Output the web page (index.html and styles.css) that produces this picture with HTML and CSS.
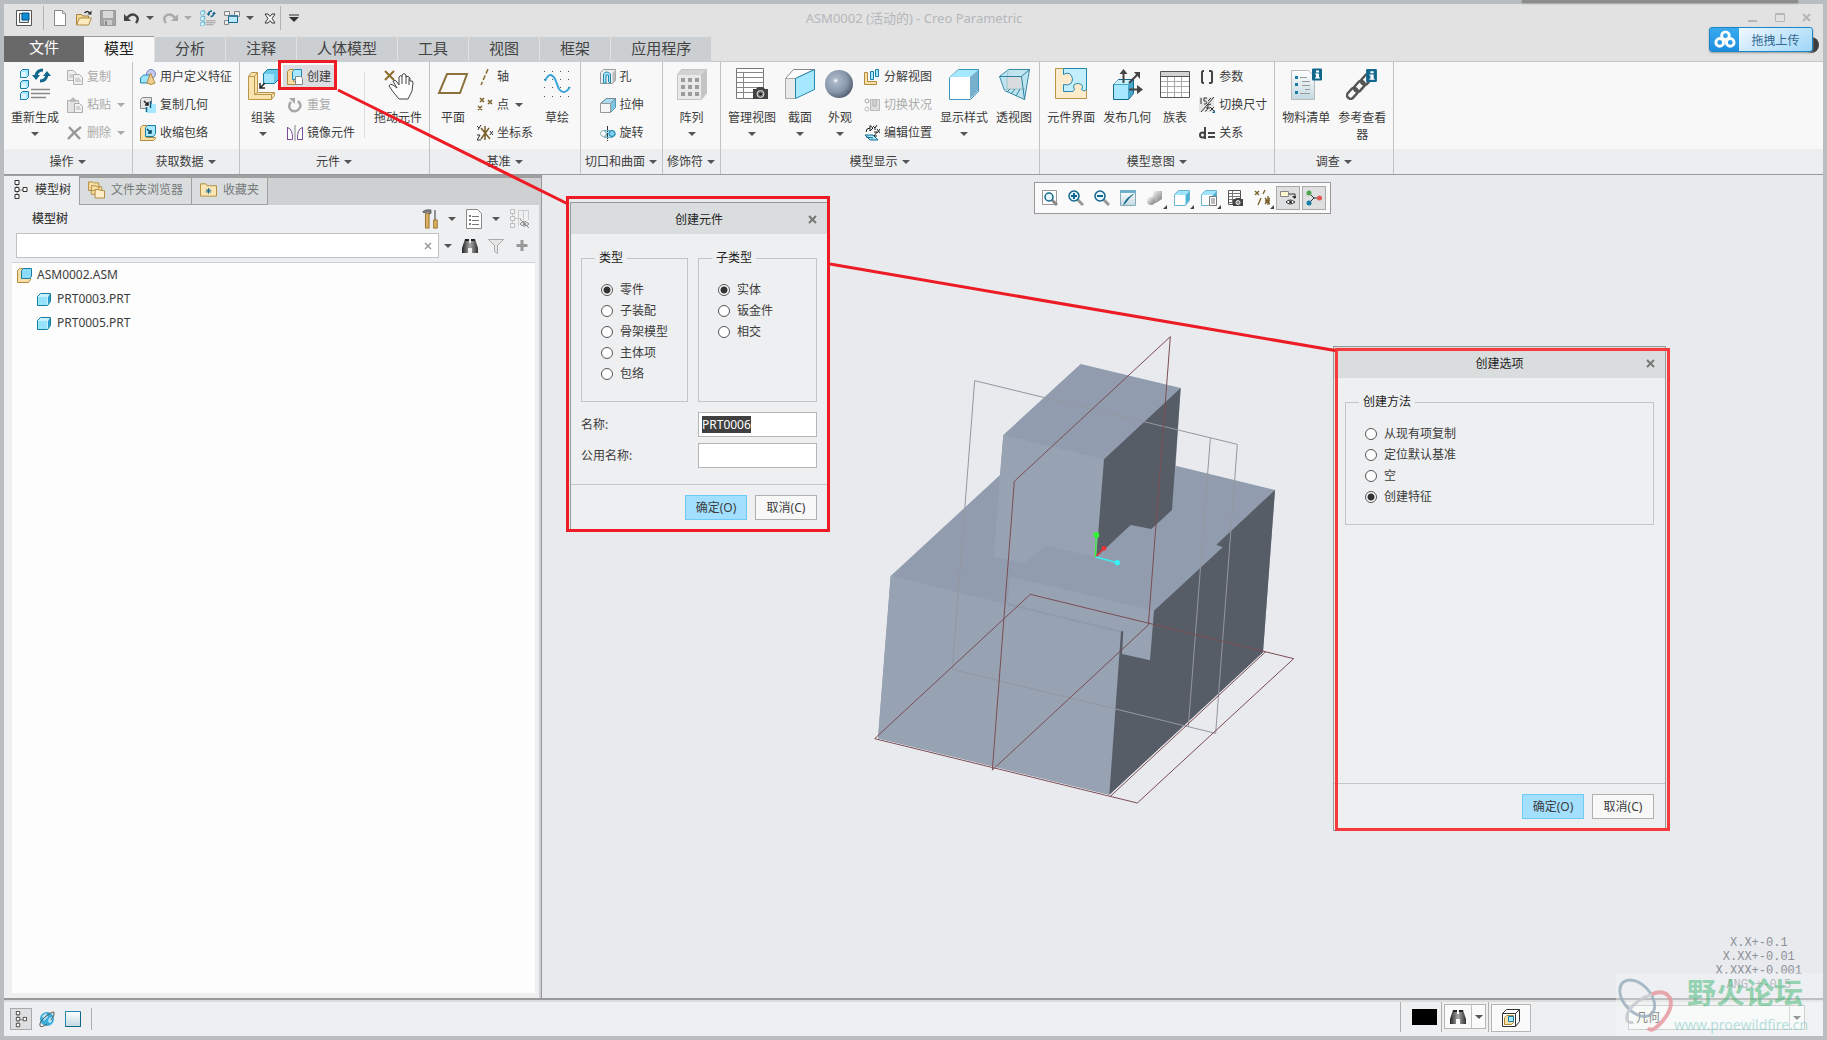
FILE: index.html
```html
<!DOCTYPE html>
<html lang="zh-CN">
<head>
    <meta charset="UTF-8">
    <meta name="viewport" content="width=device-width, initial-scale=1.0">
    <title>ASM0002 (活动的) - Creo Parametric</title>
    <link rel="stylesheet" href="styles.css">
</head>
<body>
    <!-- 图标库 -->
    <svg class="sprite" aria-hidden="true">
        <defs>
            <linearGradient id="gWhite" x1="0" y1="0" x2="0" y2="1"><stop offset="0" stop-color="#fff"/><stop offset="1" stop-color="#c3d8e0"/></linearGradient>
            <linearGradient id="gDark" x1="0" y1="0" x2="1" y2="0"><stop offset="0" stop-color="#222"/><stop offset=".5" stop-color="#aaa"/><stop offset="1" stop-color="#333"/></linearGradient>
            <radialGradient id="gBall" cx=".38" cy=".38" r=".65"><stop offset="0" stop-color="#fff"/><stop offset=".15" stop-color="#a9b7c8"/><stop offset=".65" stop-color="#8796aa"/><stop offset="1" stop-color="#566273"/></radialGradient>
            <linearGradient id="gGray" x1="0" y1="0" x2="1" y2="1"><stop offset="0" stop-color="#fff"/><stop offset="1" stop-color="#777"/></linearGradient>
        </defs>
        <symbol id="i-app" viewBox="0 0 16 16"><path d="M.5.5h15v15H.5z" fill="#fff" stroke="#555"/><path d="M3.500 3.500h9v9h-9z" fill="#d9e8ef" stroke="#555"/><path d="M6 3h7v7H6z" fill="#0a8fd6" stroke="#0b4f7c"/></symbol>
        <symbol id="i-new" viewBox="0 0 16 16"><path d="M2.500.5h8l3 3v12h-11z" fill="#fff" stroke="#888"/><path d="M10.500.5v3h3" fill="#ddd" stroke="#999"/></symbol>
        <symbol id="i-open" viewBox="0 0 16 16"><path d="M.5 15V4.500h5l1 1.500h6v3" fill="#f5d999" stroke="#a8803a"/><path d="M.5 15l3-7h12l-3 7z" fill="#fdebc0" stroke="#b08b3c"/><path d="M8.500 3q3-3 5 0" fill="none" stroke="#333" stroke-width="1.500"/><path d="M15.500.5v4h-4z" fill="#333"/></symbol>
        <symbol id="i-save" viewBox="0 0 16 16"><path d="M.5.5h15v15h-15z" fill="#a4a4a4" stroke="#999"/><path d="M3 1h10v7H3z" fill="#d9d9d9"/><path d="M4 10h8v5H4z" fill="#c8c8c8"/><path d="M5 11h2v4H5z" fill="#888"/></symbol>
        <symbol id="i-undo" viewBox="0 0 16 16"><path d="M3 8q4-5 8-3 5 3 1 8" fill="none" stroke="#444" stroke-width="2.500"/><path d="M0 4v7h7z" fill="#444"/></symbol>
        <symbol id="i-redo" viewBox="0 0 16 16"><path d="M13 8q-4-5-8-3-5 3-1 8" fill="none" stroke="#aaa" stroke-width="2.500"/><path d="M16 4v7H9z" fill="#aaa"/></symbol>
        <symbol id="i-regen" viewBox="0 0 32 32"><g fill="#a5e8ff" stroke="#187ea8"><path d="M1.500 3.500l2-2h6v6l-2 2h-6zM1.500 14.500l2-2h6v6l-2 2h-6zM1.500 25.500l2-2h6v6l-2 2h-6z"/></g><path d="M2 4h5v5H2zM2 15h5v5H2zM2 26h5v5H2z" fill="#dcf6ff"/><path d="M24 2q-6 0-7 6M21 13q6 0 7-6" fill="none" stroke="#12678c" stroke-width="3"/><path d="M13 7h8l-4 5zM24 8h8l-4-5z" fill="#12678c"/><path d="M12 21.500h19M12 25.500h19M12 29.500h15" stroke="#888" stroke-width="1.500"/></symbol>
        <symbol id="i-wins" viewBox="0 0 16 16"><path d="M.5 1.500h5v4h-5zM10.500 1.500h5v5h-5zM.5 10.500h4v4h-4z" fill="#eee" stroke="#888"/><path d="M4.500 5.500h9v7h-9z" fill="#bdeafc" stroke="#12678c"/><path d="M4 5h10v2H4z" fill="#3f7f9c"/></symbol>
        <symbol id="i-closewin" viewBox="0 0 16 16"><path d="M3 4h3l2 2.500L10 4h3l-3 4.500L13 13h-3l-2-2.500L6 13H3l3-4.500z" fill="#fff" stroke="#333"/></symbol>
        <symbol id="i-copy" viewBox="0 0 16 16"><g fill="#eee" stroke="#b0b0b0"><path d="M.5 1.500h6l3 3v7h-9z"/><path d="M6.500 5.500h6l3 3v7h-9z"/></g><path d="M2 6h4M2 8h4M8 10h5M8 12h6" stroke="#b5b5b5"/></symbol>
        <symbol id="i-paste" viewBox="0 0 16 16"><path d="M.5 3.500h11v12h-11z" fill="#e3e3e3" stroke="#b0b0b0"/><path d="M3 3l3-3 3 3v2H3z" fill="#bbb"/><path d="M7.500 6.500h5l3 3v6h-8z" fill="#f3f3f3" stroke="#aaa"/><path d="M9 10h4M9 12h5" stroke="#b5b5b5"/></symbol>
        <symbol id="i-del" viewBox="0 0 16 16"><path d="M2 2l11 12M14 2Q7 7 1 14" stroke="#999" stroke-width="2.500" fill="none"/></symbol>
        <symbol id="i-udf" viewBox="0 0 16 16"><circle cx="11" cy="5" r="4.500" fill="#c4cbf2" stroke="#7a84c0"/><path d="M.5 9l3-3h6v6l-2 2h-7z" fill="#9be2fa" stroke="#2587ad"/><path d="M10.500 4L15 14q-4 3-8 0z" fill="#efcf91" stroke="#b08b3c"/></symbol>
        <symbol id="i-cpgeo" viewBox="0 0 16 16"><path d="M.5 2.500l2-2h9v9l-2 2h-9z" fill="#e4e4e4" stroke="#888"/><path d="M4 4l4 4M8 5v3H5" stroke="#222" stroke-width="1.500" fill="none"/><path d="M7 11h4V7h5v9H7z" fill="#a5e8ff"/><path d="M10.500 4v7M6.500 15v-5" stroke="#12678c" stroke-width="1.500"/></symbol>
        <symbol id="i-shrink" viewBox="0 0 16 16"><path d="M.5 2.500l2-2h4v12h9v1l-2 2h-13z" fill="#fae0a6" stroke="#b08b3c"/><path d="M5.500 2.500l2-2h8v8l-2 3h-8z" fill="#a5e8ff" stroke="#187ea8"/><path d="M7 4l4 4M11 5v3H8" stroke="#0d445e" stroke-width="1.500" fill="none"/></symbol>
        <symbol id="i-asm32" viewBox="0 0 32 32"><path d="M1.500 8.500l3-4h6v20h17v3l-3 4h-23z" fill="#fbe3ad" stroke="#b9954c"/><path d="M1.500 8.500h6v18h17v5M7.500 8.500l3-4M7.500 26.500l3-2M24.500 26.500l3-2" fill="none" stroke="#b9954c"/><path d="M16.500 5.500l4-4h11v10l-4 4h-11z" fill="#6ac8ea" stroke="#187ea8"/><path d="M17 6h10v9H17z" fill="#9fe4fb"/><path d="M18 15l-5 5M13 15v5h5" stroke="#222" stroke-width="1.500" fill="none"/></symbol>
        <symbol id="i-create" viewBox="0 0 16 16"><path d="M.5 2.500l2-2h4v12h5v3h-11z" fill="#fae0a6" stroke="#b08b3c"/><path d="M5.500 2.500l2-2h7v7l-2 3h-7z" fill="#a5e8ff" stroke="#2587ad"/><path d="M8.500 7.500h5l2 2v6h-7z" fill="#fff" stroke="#888"/></symbol>
        <symbol id="i-repeat" viewBox="0 0 16 16"><path d="M11 4q5 5 0 9-5 3-8-1-2-4 1-7" fill="none" stroke="#a8a8a8" stroke-width="2.500"/><path d="M2 1h6v6z" fill="#a8a8a8"/></symbol>
        <symbol id="i-mirror" viewBox="0 0 16 16"><path d="M.5 2.500Q6 4 5.500 14.500h-5M15.500 2.500Q10 4 10.500 14.500h5M.5 2v13M15.500 2v13" fill="#fff" stroke="#7b4b9c"/><path d="M8 0v16" stroke="#888"/></symbol>
        <symbol id="i-drag" viewBox="0 0 32 32"><path d="M3 3l9 9M12 3l-9 9" stroke="#8a6d2c" stroke-width="2"/><path d="M11 13q2-2 4 1l2 3V9q2-3 3 0V7q2-3 4 0v2q2-2 4 1v3q3-1 3 2l-1 8-4 8h-9l-5-6-5-7q1-3 4-1l4 3z" fill="#fff" stroke="#444"/><path d="M20 9v7M24 8v8M27 10v7" stroke="#444"/></symbol>
        <symbol id="i-plane" viewBox="0 0 32 32"><path d="M10 6h20l-7 19H2z" fill="#fafafa" stroke="#8c713a" stroke-width="2"/></symbol>
        <symbol id="i-axis" viewBox="0 0 16 16"><path d="M11 0L4 16" stroke="#8a6d2c" stroke-width="1.500" stroke-dasharray="5 2"/></symbol>
        <symbol id="i-point" viewBox="0 0 16 16"><path d="M3 1l4 4M7 1L3 5M11 3l4 4M15 3l-4 4M1 9l4 4M5 9l-4 4" stroke="#7a602a" stroke-width="1.500"/></symbol>
        <symbol id="i-csys" viewBox="0 0 16 16"><path d="M8 1v14M4 3l9 11M12 3L4 14" stroke="#7a602a" stroke-width="1.500"/><path d="M0 1l2 2 2-3M2 3L1 5M0 10h3l-3 5h4M13 6l3 4M16 6l-3 4" stroke="#333" fill="none"/></symbol>
        <symbol id="i-sketch" viewBox="0 0 32 32"><g stroke="#555" stroke-dasharray="1 7"><path d="M3 3.500h28M3 11.500h28M3 19.500h28M3 28.500h28"/></g><path d="M4 13q5-11 10-2l4 10q5 7 11-2" fill="none" stroke="#3aa5d6" stroke-width="2"/></symbol>
        <symbol id="i-hole" viewBox="0 0 16 16"><path d="M.5 3.500l3-3h12v11l-3 3h-12z" fill="#eee" stroke="#999"/><path d="M12.500 14V4l3-3v10z" fill="#bbb"/><path d="M3.500 14V5q3-4 7 0v9l-2-1V6H6v8z" fill="#a5e8ff" stroke="#2587ad"/></symbol>
        <symbol id="i-extrude" viewBox="0 0 16 16"><path d="M.5 6.500l6-5h9v9l-5 5" fill="#7cc7e4" stroke="#5a97b0"/><path d="M.5 6.500l6-5h9l-5 5z" fill="#a8dcf0" stroke="#789"/><path d="M.5 6.500h10v9H.5z" fill="#f6f6f6" stroke="#999"/></symbol>
        <symbol id="i-revolve" viewBox="0 0 16 16"><circle cx="3.500" cy="8.500" r="3" fill="#fff" stroke="#8aa"/><path d="M4 5.500h8q4 1 3 5l-3 2H4q5-3 0-7z" fill="#a5e8ff" stroke="#7ab"/><circle cx="12" cy="8.500" r="3" fill="#7fd0f0" stroke="#187ea8"/><path d="M7.500 1v15" stroke="#333" stroke-dasharray="4 1 1 1"/></symbol>
        <symbol id="i-pattern" viewBox="0 0 32 32"><path d="M1.500 6.500l4-5h25v24l-5 6h-24z" fill="#d2d2d2" stroke="#c4c4c4"/><path d="M2 7h23v24H2z" fill="#e8e8e8"/><path d="M25 31V7l5-5v23z" fill="#c4c4c4"/><path d="M5 10h4v4H5zM12 10h4v4h-4zM19 10h4v4h-4zM5 17h4v4H5zM12 17h4v4h-4zM19 17h4v4h-4zM5 24h4v4H5zM12 24h4v4h-4zM19 24h4v4h-4z" fill="#9c9c9c"/></symbol>
        <symbol id="i-mgview" viewBox="0 0 32 32"><path d="M.5.500h27v30H.500z" fill="#fff" stroke="#777"/><path d="M1 4.500h27M1 9.500h27M1 14.500h27M1 19.500h27M1 24.500h27M7.500 5v26" stroke="#888"/><path d="M17 21h3l2-2h5l2 2h3v10H17z" fill="#444"/><circle cx="24.500" cy="26" r="3.500" fill="#777" stroke="#ddd"/><circle cx="24.500" cy="26" r="1.500" fill="#222"/></symbol>
        <symbol id="i-mgview16" viewBox="0 0 16 16"><path d="M1.500.500h12v14h-12z" fill="#fff" stroke="#555"/><path d="M2 3.500h11M2 6.500h11M2 9.500h11M2 12.500h11M5.500 1v13" stroke="#777"/><path d="M6 9h2l1-1h4l1 1h2v7H6z" fill="#444"/><circle cx="11" cy="12.500" r="2" fill="#888" stroke="#eee"/></symbol>
        <symbol id="i-section" viewBox="0 0 32 32"><path d="M1.500 10.500l8-9h21l-19 9z" fill="#fff" stroke="#888"/><path d="M1.500 10.500h10v20h-10z" fill="#e9e9e9" stroke="#aaa"/><path d="M11.500 10.500l19-9v20l-19 9z" fill="#a5e8ff" stroke="#2587ad"/></symbol>
        <symbol id="i-ball" viewBox="0 0 32 32"><circle cx="15" cy="16" r="14" fill="url(#gBall)"/></symbol>
        <symbol id="i-explode" viewBox="0 0 16 16"><path d="M.5 3.500h3v9h9v3H.500z" fill="#fae0a6" stroke="#b08b3c"/><path d="M6.500 2.500h3v8h-3zM11.500.500h3v7h-3z" fill="#a5e8ff" stroke="#187ea8"/></symbol>
        <symbol id="i-toggle" viewBox="0 0 16 16"><circle cx="3" cy="4" r="2" fill="none" stroke="#aaa"/><circle cx="3" cy="12" r="2" fill="none" stroke="#bbb"/><path d="M6.500 2.500h9v11h-9z" fill="#ddd" stroke="#bbb"/><path d="M9 3v6h3V3" fill="none" stroke="#aaa"/></symbol>
        <symbol id="i-editpos" viewBox="0 0 16 16"><path d="M1 10h8l5 5H6z" fill="#a5e8ff" stroke="#12678c"/><path d="M2 12l7 1" stroke="#12678c"/><path d="M2 7q0-4 4-4M6 .500L9 3 6 6zM9 1l2 2 2-3M11 3v2M13 4l3 4M16 4l-3 4M10 7h3l-3 4h3" stroke="#222" fill="none"/></symbol>
        <symbol id="i-box" viewBox="0 0 32 32"><path d="M1.500 9.500l9-8h20v22l-8 8h-21z" fill="#fff" stroke="#3f97bd"/><path d="M2 9l9-7h19l-8 7z" fill="#a5e8ff"/><path d="M22 31V9l8-7v21z" fill="#76b0cc"/></symbol>
        <symbol id="i-persp" viewBox="0 0 32 32"><path d="M1.500 8.500l9-7h21l-5 30-20-9z" fill="#bfe3ef" stroke="#378aa8"/><path d="M9 9h14v13H9z" fill="#d9dcde"/><path d="M10.500 1.500L9 9v12l-2.500 2M6.500 22.500L9 21h19" fill="none" stroke="#a0c4d2"/><path d="M1.500 8.500h22l8-7M23.500 8.500l3 23M12 21l-3 3M17 21l-4 5M22 21l-4 7" fill="none" stroke="#2d819f"/></symbol>
        <symbol id="i-puzzle" viewBox="0 0 32 32"><path d="M.5.500h31v30H.500z" fill="#fdebcb" stroke="#b9954c"/><path d="M8.500.500h23v21q-2 3-5 0 3-5-3-6-7 0-4 6-1 3-4 2H8.500v-7q9 2 9-6-2-8-9-4z" fill="#c3eefd" stroke="#2587ad"/></symbol>
        <symbol id="i-publish" viewBox="0 0 32 32"><path d="M2.500 16.500l5-5h15v14l-5 6h-15z" fill="#4aa6cb" stroke="#12678c"/><path d="M3 17h14v14H3z" fill="#a5e8ff"/><path d="M7 12h14l-4 4H3z" fill="#c9f2ff"/><path d="M12.500 15V4M18 15L27 6M18 21.500h9" stroke="#444" stroke-width="2"/><path d="M8.500 6l4-5 4 5zM23 4h6v7zM26 17l6 4.500-6 4.500z" fill="#444"/></symbol>
        <symbol id="i-table" viewBox="0 0 32 32"><path d="M1.500 3.500h29v26h-29z" fill="#fff" stroke="#555"/><path d="M2 4h28v4H2z" fill="#d2d2d2"/><path d="M2 8.500h28" stroke="#555"/><path d="M2 13.500h28M2 18.500h28M2 24.500h28M8.500 9v20M15.500 9v20M22.500 9v20" stroke="#aaa"/></symbol>
        <symbol id="i-param" viewBox="0 0 16 16"><path d="M5 2H4L3 3v10l1 1h1M10 2h2l1 1v10l-1 1h-2" fill="none" stroke="#444" stroke-width="2"/></symbol>
        <symbol id="i-dim" viewBox="0 0 16 16"><path d="M0 0h15v15H0z" fill="#e4e4e4"/><path d="M2 1v6M8 1H5v3q4 0 2 3H5M15 0L2 15M6 14q3 0 3-6l3-1M7 11h4M11 10l4 4M15 10l-4 4M9 4l3-3" fill="none" stroke="#333"/><path d="M16 13v3h-3z" fill="#12678c"/></symbol>
        <symbol id="i-rel" viewBox="0 0 16 16"><circle cx="3.500" cy="10" r="2.500" fill="none" stroke="#444" stroke-width="2"/><path d="M6 2v12M9 8h7M9 12h7" stroke="#444" stroke-width="2"/></symbol>
        <symbol id="i-info" viewBox="0 0 10 12"><rect width="10" height="12" rx="1" fill="#12678c"/><path d="M4 2h3v2H4zM3 5h4v4h1v1H3V9h1V6H3z" fill="#fff"/></symbol>
        <symbol id="i-bom" viewBox="0 0 32 32"><path d="M1.500 2.500h17l6 6v23h-23z" fill="url(#gWhite)" stroke="#bbb"/><path d="M5 8h3v3H5zM5 15h3v3H5zM5 23h3v3H5z" fill="#187ea8"/><path d="M10 9.500h7M12 13.500h8M12 17.500h8M15 21.500h5M10 25.500h10" stroke="#999"/><use href="#i-info" x="22" y="0" width="10" height="13"/></symbol>
        <symbol id="i-chain" viewBox="0 0 32 32"><g fill="none" stroke="#555" stroke-width="2.500"><rect x="0" y="22" width="12" height="7" rx="3" transform="rotate(-48 6 25)"/><rect x="7" y="15" width="12" height="7" rx="3" transform="rotate(-48 13 18)"/><rect x="14" y="8" width="12" height="7" rx="3" transform="rotate(-48 20 11)"/></g><use href="#i-info" x="20" y="1" width="11" height="13"/></symbol>
        <symbol id="i-zoomfit" viewBox="0 0 16 16"><path d="M.5.500h14v14H.500z" fill="#fff" stroke="#999"/><path d="M10 10l5 5" stroke="#888" stroke-width="3"/><circle cx="7" cy="7" r="4" fill="#e6f7fd" stroke="#12678c" stroke-width="1.500"/></symbol>
        <symbol id="i-zoomin" viewBox="0 0 16 16"><path d="M9 9l6 6" stroke="#999" stroke-width="3"/><circle cx="6" cy="6" r="5" fill="#e6f7fd" stroke="#12678c" stroke-width="1.500"/><path d="M3 6h6M6 3v6" stroke="#12678c" stroke-width="2"/></symbol>
        <symbol id="i-zoomout" viewBox="0 0 16 16"><path d="M9 9l6 6" stroke="#999" stroke-width="3"/><circle cx="6" cy="6" r="5" fill="#e6f7fd" stroke="#12678c" stroke-width="1.500"/><path d="M3 6h6" stroke="#12678c" stroke-width="2"/></symbol>
        <symbol id="i-repaint" viewBox="0 0 16 16"><path d="M.5.500h15v15H.500z" fill="url(#gWhite)" stroke="#8ab"/><path d="M0 0h16v3H0z" fill="#6fb0cb"/><path d="M15 3q-5 4-10 11l-2 1q3-8 12-12z" fill="#12678c"/></symbol>
        <symbol id="i-shade" viewBox="0 0 16 16"><path d="M7 1l8 0v8l-6 4H4z" fill="url(#gGray)"/><circle cx="4" cy="11" r="4" fill="url(#gGray)"/></symbol>
        <symbol id="i-box16" viewBox="0 0 16 16"><path d="M.5 4.500l4-4h11v10l-4 5H.500z" fill="#9fe4fb" stroke="#6ab4d0"/><path d="M1 5h10v10H1z" fill="#fff"/><path d="M12 14V5l3-3v8z" fill="#4fb0d5"/></symbol>
        <symbol id="i-boxlist" viewBox="0 0 16 16"><use href="#i-box16" width="16" height="16"/><path d="M8.500 6.500h7v9h-7z" fill="#fff" stroke="#777"/><path d="M10 9h4M10 11h4M10 13h4" stroke="#777"/></symbol>
        <symbol id="i-annot" viewBox="0 0 16 16"><path d="M1 1l4 4M5 1L1 5M11 0L9 4M7 8l-3 7M11 11h6M14 6v9M11 8l5 6M16 8l-5 6" stroke="#7a602a" stroke-width="1.300"/></symbol>
        <symbol id="i-anneye" viewBox="0 0 16 16"><path d="M.5 1.500h8v5h-8z" fill="#fff6cf" stroke="#888"/><path d="M9 4h6v4" fill="none" stroke="#333"/><path d="M12 6h5l-2.500 3z" fill="#333"/><path d="M6 12q4-4 9 0-5 4-9 0z" fill="#fff" stroke="#333"/><circle cx="10.500" cy="12" r="1.500" fill="#333"/></symbol>
        <symbol id="i-spin" viewBox="0 0 16 16"><path d="M3 3l5 5-5 5M8 8h6" fill="none" stroke="#333"/><circle cx="3" cy="3" r="2.500" fill="#4ca54e"/><circle cx="3" cy="13" r="2.500" fill="#187ea8"/><circle cx="13.500" cy="8" r="2.500" fill="#e0584f"/></symbol>
        <symbol id="i-tree" viewBox="0 0 16 20"><path d="M4.500 3v14M5 10h6" stroke="#888"/><path d="M2.500.500h4v4h-4zM2.500 7.500h4v4h-4zM2.500 14.500h4v4h-4zM10.500 7.500h4v4h-4z" fill="#fff" stroke="#333"/></symbol>
        <symbol id="i-folders" viewBox="0 0 18 20"><g fill="#f9dfa3" stroke="#b08b3c"><path d="M.5 10.500v-9h5l1 1h5v8zM3.500 14.500v-9h5l1 1h5v8z"/><path d="M7.500 18.500v-9h4l1 1h5v8z" fill="#fdedc9"/></g></symbol>
        <symbol id="i-fav" viewBox="0 0 18 18"><path d="M.5 15.500v-13h6l1 2h10v11z" fill="#fbe6b6" stroke="#b08b3c"/><path d="M9 7v6M6 10h6M7 8l4 4M11 8l-4 4" stroke="#12678c"/></symbol>
        <symbol id="i-hammer" viewBox="0 0 16 22"><path d="M0 3q3-3 9-2v4H7V3L1 4z" fill="#888" stroke="#555"/><path d="M3 5h4v16H3z" fill="#dcae60" stroke="#966f2e"/><path d="M13.500 1v11" stroke="#888" stroke-width="2"/><path d="M12 12h4v9h-4z" fill="#dcae60" stroke="#966f2e"/></symbol>
        <symbol id="i-list" viewBox="0 0 16 20"><path d="M.5.500h11l4 4v15H.500z" fill="#fff" stroke="#888"/><circle cx="4" cy="7" r="1" fill="#555"/><circle cx="4" cy="11" r="1" fill="#555"/><circle cx="4" cy="15" r="1" fill="#555"/><path d="M6 7.500h7M6 11.500h7M6 15.500h7" stroke="#777"/></symbol>
        <symbol id="i-treehide" viewBox="0 0 20 20"><path d="M2.500 3v14M8 1.500h11M8.500 1v16M13.500 1v10M18.500 1v10M3 9.500h8" stroke="#ccc"/><path d="M.5.500h4v4h-4zM.5 7.500h4v4h-4zM.5 14.500h4v4h-4z" fill="#f3f3f3" stroke="#bbb"/><path d="M10 15q4-5 9 0-5 4-9 0zM10 10l9 9" fill="none" stroke="#888"/><circle cx="14.500" cy="15" r="1.500" fill="#888"/></symbol>
        <symbol id="i-bino" viewBox="0 0 16 16"><path d="M3 1h4v4h2V1h4l3 9v5h-6v-5H6v5H0v-5z" fill="url(#gDark)"/><path d="M3 1h4v2H3zM9 1h4v2H9z" fill="#222"/></symbol>
        <symbol id="i-funnel" viewBox="0 0 16 16"><path d="M.5 1.500h15l-6 6v8l-3-2v-6z" fill="#e6e6e6" stroke="#aaa"/></symbol>
        <symbol id="i-plus" viewBox="0 0 16 16"><path d="M8 2v11M2.500 7.500h11" stroke="#999" stroke-width="3"/></symbol>
        <symbol id="i-asm" viewBox="0 0 16 16"><path d="M.5 3.500l2-2h11v11l-2 3H.500z" fill="#fae0a6" stroke="#b08b3c"/><path d="M4.500 3.500l2-2h8v8l-2 2h-8z" fill="#8adcf8" stroke="#187ea8"/></symbol>
        <symbol id="i-part" viewBox="0 0 14 14"><path d="M.5 4.500l3-3h10v8l-3 4H.500z" fill="#c8f1fe" stroke="#187ea8"/><path d="M1 5h9v8H1z" fill="#96e3fb"/><path d="M11 13V5l2-3v8z" fill="#2a9bc9"/></symbol>
        <symbol id="i-globe" viewBox="0 0 16 16"><circle cx="8" cy="8" r="7" fill="#3cadd9"/><path d="M3 5l4-3 2 4-4 4zM10 7l4-1-2 6-3-1z" fill="#b5e5f8"/><path d="M8 13q-6 4-7 2-1-4 5-9t9-5q1 3-3 8" fill="none" stroke="#555"/></symbol>
        <symbol id="i-square" viewBox="0 0 16 16"><path d="M.5.500h15v15H.500z" fill="url(#gWhite)" stroke="#2587ad"/><path d="M15.500 1v14.500H0" fill="none" stroke="#12678c"/></symbol>
        <symbol id="i-cubes" viewBox="0 0 20 20"><path d="M1.500 5.500l4-4h13v12l-4 5h-13zM1.500 5.500h13v13M14.500 5.500l4-4" fill="#fff" stroke="#333"/><path d="M3.500 9.500l2-2h7v7l-2 2h-7z" fill="#fae0a6" stroke="#b08b3c"/><path d="M7.500 8.500h5v5h-5z" fill="#a5e8ff" stroke="#187ea8"/></symbol>
    </svg>

    <div class="window">
        <header class="titlebar">
            <div class="quick">
                <svg class="i16"><use href="#i-app"/></svg>
                <span class="vsep app-sep"></span>
                <button aria-label="新建"><svg class="i16"><use href="#i-new"/></svg></button>
                <button aria-label="打开"><svg class="i16"><use href="#i-open"/></svg></button>
                <button aria-label="保存"><svg class="i16"><use href="#i-save"/></svg></button>
                <button aria-label="撤消"><svg class="i16"><use href="#i-undo"/></svg></button>
                <span class="caret"></span>
                <button aria-label="重做"><svg class="i16"><use href="#i-redo"/></svg></button>
                <span class="caret off"></span>
                <button aria-label="重新生成"><svg class="i16"><use href="#i-regen"/></svg></button>
                <button aria-label="窗口"><svg class="i16"><use href="#i-wins"/></svg></button>
                <span class="caret"></span>
                <button aria-label="关闭"><svg class="i16"><use href="#i-closewin"/></svg></button>
                <span class="vsep end-sep"></span>
                <svg class="more" viewBox="0 0 10 8"><path d="M0 1h10" stroke="#333" stroke-width="1"/><path d="M0 3h10L5 8z" fill="#333"/></svg>
            </div>
            <h1 class="title">ASM0002 (活动的) - Creo Parametric</h1>
            <div class="win-buttons">
                <button aria-label="最小化"><svg class="i10" viewBox="0 0 10 10"><path d="M0 8h9" stroke="#b4b6b8" stroke-width="2"/></svg></button>
                <button aria-label="最大化"><svg class="i10" viewBox="0 0 10 10"><path d="M.5.500h9v8h-9zM0 1.500h10" fill="none" stroke="#b4b6b8"/></svg></button>
                <button aria-label="关闭窗口"><svg class="i10" viewBox="0 0 10 10"><path d="M1 1l7 7M8 1L1 8" stroke="#b4b6b8" stroke-width="2"/></svg></button>
            </div>
        </header>

        <nav class="tabs">
            <a href="#" class="tab-file">文件</a>
            <a href="#" class="active">模型</a>
            <a href="#">分析</a>
            <a href="#">注释</a>
            <a href="#">人体模型</a>
            <a href="#">工具</a>
            <a href="#">视图</a>
            <a href="#">框架</a>
            <a href="#">应用程序</a>
        </nav>

        <!-- 功能区 -->
        <div class="ribbon">
            <section class="group">
                <div class="group-body">
                    <button class="big"><svg class="i32"><use href="#i-regen"/></svg><span>重新生成</span><i class="caret"></i></button>
                    <div class="col">
                        <button class="small off"><svg class="i16"><use href="#i-copy"/></svg>复制</button>
                        <button class="small off"><svg class="i16"><use href="#i-paste"/></svg>粘贴<i class="caret off"></i></button>
                        <button class="small off"><svg class="i16"><use href="#i-del"/></svg>删除<i class="caret off"></i></button>
                    </div>
                </div>
                <h2>操作<i class="caret"></i></h2>
            </section>
            <section class="group">
                <div class="group-body">
                    <div class="col">
                        <button class="small"><svg class="i16"><use href="#i-udf"/></svg>用户定义特征</button>
                        <button class="small"><svg class="i16"><use href="#i-cpgeo"/></svg>复制几何</button>
                        <button class="small"><svg class="i16"><use href="#i-shrink"/></svg>收缩包络</button>
                    </div>
                </div>
                <h2>获取数据<i class="caret"></i></h2>
            </section>
            <section class="group">
                <div class="group-body">
                    <button class="big"><svg class="i32"><use href="#i-asm32"/></svg><span>组装</span><i class="caret"></i></button>
                    <div class="col">
                        <button class="small pressed"><svg class="i16"><use href="#i-create"/></svg>创建</button>
                        <button class="small off"><svg class="i16"><use href="#i-repeat"/></svg>重复</button>
                        <button class="small"><svg class="i16"><use href="#i-mirror"/></svg>镜像元件</button>
                    </div>
                    <span class="divider"></span>
                    <button class="big"><svg class="i32"><use href="#i-drag"/></svg><span>拖动元件</span></button>
                </div>
                <h2>元件<i class="caret"></i></h2>
            </section>
            <section class="group">
                <div class="group-body">
                    <button class="big"><svg class="i32"><use href="#i-plane"/></svg><span>平面</span></button>
                    <div class="col">
                        <button class="small"><svg class="i16"><use href="#i-axis"/></svg>轴</button>
                        <button class="small"><svg class="i16"><use href="#i-point"/></svg>点<i class="caret"></i></button>
                        <button class="small"><svg class="i16"><use href="#i-csys"/></svg>坐标系</button>
                    </div>
                    <button class="big"><svg class="i32"><use href="#i-sketch"/></svg><span>草绘</span></button>
                </div>
                <h2>基准<i class="caret"></i></h2>
            </section>
            <section class="group">
                <div class="group-body">
                    <div class="col">
                        <button class="small"><svg class="i16"><use href="#i-hole"/></svg>孔</button>
                        <button class="small"><svg class="i16"><use href="#i-extrude"/></svg>拉伸</button>
                        <button class="small"><svg class="i16"><use href="#i-revolve"/></svg>旋转</button>
                    </div>
                </div>
                <h2>切口和曲面<i class="caret"></i></h2>
            </section>
            <section class="group">
                <div class="group-body">
                    <button class="big"><svg class="i32"><use href="#i-pattern"/></svg><span>阵列</span><i class="caret"></i></button>
                </div>
                <h2>修饰符<i class="caret"></i></h2>
            </section>
            <section class="group">
                <div class="group-body">
                    <button class="big"><svg class="i32"><use href="#i-mgview"/></svg><span>管理视图</span><i class="caret"></i></button>
                    <button class="big"><svg class="i32"><use href="#i-section"/></svg><span>截面</span><i class="caret"></i></button>
                    <button class="big"><svg class="i32"><use href="#i-ball"/></svg><span>外观</span><i class="caret"></i></button>
                    <div class="col">
                        <button class="small"><svg class="i16"><use href="#i-explode"/></svg>分解视图</button>
                        <button class="small off"><svg class="i16"><use href="#i-toggle"/></svg>切换状况</button>
                        <button class="small"><svg class="i16"><use href="#i-editpos"/></svg>编辑位置</button>
                    </div>
                    <button class="big"><svg class="i32"><use href="#i-box"/></svg><span>显示样式</span><i class="caret"></i></button>
                    <button class="big"><svg class="i32"><use href="#i-persp"/></svg><span>透视图</span></button>
                </div>
                <h2>模型显示<i class="caret"></i></h2>
            </section>
            <section class="group">
                <div class="group-body">
                    <button class="big"><svg class="i32"><use href="#i-puzzle"/></svg><span>元件界面</span></button>
                    <button class="big"><svg class="i32"><use href="#i-publish"/></svg><span>发布几何</span></button>
                    <button class="big"><svg class="i32"><use href="#i-table"/></svg><span>族表</span></button>
                    <div class="col">
                        <button class="small"><svg class="i16"><use href="#i-param"/></svg>参数</button>
                        <button class="small"><svg class="i16"><use href="#i-dim"/></svg>切换尺寸</button>
                        <button class="small"><svg class="i16"><use href="#i-rel"/></svg>关系</button>
                    </div>
                </div>
                <h2>模型意图<i class="caret"></i></h2>
            </section>
            <section class="group">
                <div class="group-body">
                    <button class="big"><svg class="i32"><use href="#i-bom"/></svg><span>物料清单</span></button>
                    <button class="big"><svg class="i32"><use href="#i-chain"/></svg><span>参考查看器</span></button>
                </div>
                <h2>调查<i class="caret"></i></h2>
            </section>
        </div>

        <div class="main">
            <!-- 模型树 -->
            <aside class="sidebar">
                <div class="side-tabs">
                    <button class="active"><svg><use href="#i-tree"/></svg>模型树</button>
                    <button><svg><use href="#i-folders"/></svg>文件夹浏览器</button>
                    <button><svg><use href="#i-fav"/></svg>收藏夹</button>
                </div>
                <div class="tree-head">
                    <label for="search">模型树</label>
                    <svg class="tool"><use href="#i-hammer"/></svg>
                    <i class="caret"></i>
                    <svg class="tool"><use href="#i-list"/></svg>
                    <i class="caret"></i>
                    <svg class="tool wide"><use href="#i-treehide"/></svg>
                </div>
                <div class="tree-search">
                    <div class="search-box">
                        <input type="text" id="search">
                        <svg class="i10" viewBox="0 0 10 10"><path d="M2 2l6 6M8 2L2 8" stroke="#999" stroke-width="1.500"/></svg>
                    </div>
                    <i class="caret"></i>
                    <svg class="i16"><use href="#i-bino"/></svg>
                    <svg class="i16"><use href="#i-funnel"/></svg>
                    <svg class="i16"><use href="#i-plus"/></svg>
                </div>
                <ul class="tree">
                    <li><svg class="i16"><use href="#i-asm"/></svg>ASM0002.ASM</li>
                    <li class="child"><svg class="i14"><use href="#i-part"/></svg>PRT0003.PRT</li>
                    <li class="child"><svg class="i14"><use href="#i-part"/></svg>PRT0005.PRT</li>
                </ul>
            </aside>

            <!-- 图形区 -->
            <main class="canvas">
                <div class="view-bar">
                    <button aria-label="重新调整"><svg class="i16"><use href="#i-zoomfit"/></svg></button>
                    <button aria-label="放大"><svg class="i16"><use href="#i-zoomin"/></svg></button>
                    <button aria-label="缩小"><svg class="i16"><use href="#i-zoomout"/></svg></button>
                    <button aria-label="重画"><svg class="i16"><use href="#i-repaint"/></svg></button>
                    <button class="has-menu" aria-label="着色"><svg class="i16"><use href="#i-shade"/></svg></button>
                    <button class="has-menu" aria-label="显示样式"><svg class="i16"><use href="#i-box16"/></svg></button>
                    <button class="has-menu" aria-label="已保存方向"><svg class="i16"><use href="#i-boxlist"/></svg></button>
                    <button aria-label="视图管理器"><svg class="i16"><use href="#i-mgview16"/></svg></button>
                    <button class="has-menu" aria-label="基准显示"><svg class="i16"><use href="#i-annot"/></svg></button>
                    <button class="on" aria-label="注释显示"><svg class="i16"><use href="#i-anneye"/></svg></button>
                    <button class="on" aria-label="旋转中心"><svg class="i16"><use href="#i-spin"/></svg></button>
                </div>

                <svg class="model" viewBox="0 0 1350 1500">
                    <path d="M92 768L420 465 430 345 662 132 962 204 947 437 1245 510 1209 997 748 1424 54 1255z" fill="#919dae"/>
                    <path d="M92 768L443 853 450 770 882 872 870 1021 786 1002 748 1424 54 1255z" fill="#97a2b3"/>
                    <path d="M430 345L732 418 709 711 557 677 492 731 401 711z" fill="#97a2b3"/>
                    <path d="M443 850L790 934 790 940 443 856z" fill="#8f9bab"/>
                    <path d="M732 418L962 204 936 570 874 627 812 615 709 711z" fill="#575d67"/>
                    <path d="M1245 510L1209 997 748 1424 783 934 790 934 786 1002 870 1021 882 872 1088 682 1069 674z" fill="#575d67"/>
                    <g fill="none" stroke="#9497a0" stroke-width="3">
                        <path d="M344 182L1132 373 1067 1240 277 1048z"/>
                        <path d="M1051 355L985 1221"/>
                    </g>
                    <g fill="none" stroke="#7a4d53" stroke-width="3">
                        <path d="M931 50L463 484 397 1350 865 915z"/>
                        <path d="M511 823L1301 1016 832 1449 44 1256z"/>
                        <path d="M1217 995L750 1430"/>
                    </g>
                    <path d="M706 711l26-26" stroke="#ee3030" stroke-width="4"/>
                    <path d="M706 711l3-66" stroke="#35f335" stroke-width="4"/>
                    <path d="M706 711l66 17" stroke="#35f3f8" stroke-width="4"/>
                    <circle cx="709" cy="645" r="9" fill="#35f335"/>
                    <circle cx="732" cy="685" r="7" fill="#ee3030"/>
                    <circle cx="772" cy="728" r="8" fill="#35f3f8"/>
                </svg>

                <p class="tolerance">X.X+-0.1<br>X.XX+-0.01<br>X.XXX+-0.001<br>ANG.+-0.5</p>
            </main>
        </div>

        <footer class="status">
            <button class="status-tree" aria-label="导航器"><svg><use href="#i-tree"/></svg></button>
            <svg class="i16"><use href="#i-globe"/></svg>
            <svg class="i16"><use href="#i-square"/></svg>
            <span class="vsep"></span>
            <div class="status-right">
                <span class="vsep tall"></span>
                <span class="swatch"></span>
                <span class="vsep tall"></span>
                <button class="find" aria-label="查找"><svg class="i16"><use href="#i-bino"/></svg><span class="find-arrow"><i class="caret"></i></span></button>
                <span class="vsep tall"></span>
                <button class="cubes" aria-label="选择"><svg class="i20"><use href="#i-cubes"/></svg></button>
                <div class="filter">
                    <select aria-label="选择过滤器"><option>几何</option></select>
                    <span class="find-arrow"><i class="caret"></i></span>
                </div>
            </div>
        </footer>
    </div>

    <!-- 创建元件对话框 -->
    <form class="dialog dialog-part">
        <header><h2>创建元件</h2><button type="button" class="close" aria-label="关闭"><svg class="i10" viewBox="0 0 10 10"><path d="M1 1l7 7M8 1L1 8" stroke="#777" stroke-width="2"/></svg></button></header>
        <div class="dialog-body">
            <div class="type-row">
                <fieldset>
                    <legend>类型</legend>
                    <label><input type="radio" name="type" checked>零件</label>
                    <label><input type="radio" name="type">子装配</label>
                    <label><input type="radio" name="type">骨架模型</label>
                    <label><input type="radio" name="type">主体项</label>
                    <label><input type="radio" name="type">包络</label>
                </fieldset>
                <fieldset>
                    <legend>子类型</legend>
                    <label><input type="radio" name="subtype" checked>实体</label>
                    <label><input type="radio" name="subtype">钣金件</label>
                    <label><input type="radio" name="subtype">相交</label>
                </fieldset>
            </div>
            <div class="field"><label for="partName">名称:</label><input type="text" id="partName" value="PRT0006"></div>
            <div class="field"><label for="commonName">公用名称:</label><input type="text" id="commonName"></div>
        </div>
        <div class="dialog-foot">
            <button type="button" class="primary">确定(O)</button>
            <button type="button">取消(C)</button>
        </div>
    </form>

    <!-- 创建选项对话框 -->
    <form class="dialog dialog-options">
        <header><h2>创建选项</h2><button type="button" class="close" aria-label="关闭"><svg class="i10" viewBox="0 0 10 10"><path d="M1 1l7 7M8 1L1 8" stroke="#777" stroke-width="2"/></svg></button></header>
        <div class="dialog-body">
            <fieldset>
                <legend>创建方法</legend>
                <label><input type="radio" name="method">从现有项复制</label>
                <label><input type="radio" name="method">定位默认基准</label>
                <label><input type="radio" name="method">空</label>
                <label><input type="radio" name="method" checked>创建特征</label>
            </fieldset>
        </div>
        <div class="dialog-foot">
            <button type="button" class="primary">确定(O)</button>
            <button type="button">取消(C)</button>
        </div>
    </form>

    <!-- 红色标注 -->
    <svg class="marks" viewBox="0 0 1827 1040" aria-hidden="true">
        <g fill="none" stroke="#ed1c24" stroke-width="3">
            <path d="M279.500 61.500h56v27h-56zM338 90l230 114M830 264l508 87"/>
            <path d="M567.500 197.500h261v333h-261z"/>
            <path d="M1336.500 349.500h332v480h-332z" stroke="#f83a3c"/>
        </g>
    </svg>

    <span class="top-shadow"></span>
    <span class="help-dot"></span>
    <button class="upload">
        <svg viewBox="0 0 30 24"><g fill="none" stroke="#fff" stroke-width="3"><circle cx="16" cy="8" r="4"/><circle cx="10" cy="15" r="4"/><circle cx="21" cy="15" r="4"/></g></svg>
        <span>拖拽上传</span>
    </button>

    <div class="watermark">
        <svg viewBox="0 0 60 60"><g fill="none"><ellipse cx="22" cy="24" rx="14" ry="22" transform="rotate(-42 22 24)" stroke="#9db0c0" stroke-width="3"/><path d="M37 20q13-6 19 4 4 13-13 29-6 6-10 2" stroke="#e79aa0" stroke-width="4"/><path d="M37 20q-14 4-24 17-6 13 5 12" stroke="#c4cad0" stroke-width="3"/></g></svg>
        <strong>野火论坛</strong>
        <span>www.proewildfire.cn</span>
    </div>

    <script>
        // 打开对话框时选中默认名称
        document.getElementById('partName').select();
    </script>
</body>
</html>
```

FILE: styles.css
```css
* {
    box-sizing: border-box;
}

body {
    margin: 0;
    font-family: "Noto Sans", "Noto Sans CJK SC", sans-serif;
    font-size: 12px;
    line-height: 16px;
    color: #3c3c3c;
    overflow: hidden;
}

button {
    margin: 0;
    padding: 0;
    border: none;
    background: none;
    font: inherit;
    color: inherit;
}

h1, h2, p, ul {
    margin: 0;
    padding: 0;
    font-weight: 400;
}

svg {
    display: block;
    flex: none;
}

.sprite {
    position: absolute;
    width: 0;
    height: 0;
}

.i10 { width: 10px; height: 10px; }
.i14 { width: 14px; height: 14px; }
.i16 { width: 16px; height: 16px; }
.i20 { width: 20px; height: 20px; }
.i32 { width: 32px; height: 32px; }

.caret {
    flex: none;
    width: 8px;
    border: 4px solid transparent;
    border-top-color: #555;
    border-bottom: none;
}

.caret.off {
    border-top-color: #aaa;
}

.vsep {
    flex: none;
    width: 1px;
    height: 22px;
    background: #b0b0b0;
}

/* 主窗口 */
.window {
    display: flex;
    flex-direction: column;
    height: 100vh;
    border: 4px solid #b9bdc0;
    background: #e2e2e2;
}

.titlebar {
    display: flex;
    align-items: flex-start;
    height: 32px;
}

.quick {
    flex: 1;
    display: flex;
    align-items: center;
    gap: 8px;
    height: 28px;
    padding-left: 12px;
}

.quick .caret {
    margin-left: -2px;
}

.quick .vsep {
    height: 24px;
}

.app-sep {
    margin-left: 3px;
}

.end-sep {
    margin-left: -6px;
}

.more {
    width: 10px;
    height: 8px;
}

.title {
    font-size: 13px;
    line-height: 28px;
    color: #b4b7ba;
}

.win-buttons {
    flex: 1;
    display: flex;
    justify-content: flex-end;
    gap: 17px;
    padding: 9px 11px 0 0;
}

/* 选项卡 */
.tabs {
    display: flex;
    gap: 1px;
    height: 26px;
    border-bottom: 1px solid #c4c6c8;
    font-size: 15px;
    line-height: 22px;
}

.tabs a {
    height: 26px;
    margin-top: 1px;
    padding: 0 20px;
    background: #cbcfd2;
    color: #444;
    text-decoration: none;
}

.tabs .tab-file {
    margin: 0 -1px 0 0;
    padding: 0 25px;
    background: #696969;
    color: #fff;
}

.tabs .active {
    margin-top: 0;
    height: 27px;
    border-top: 1px solid #999;
    background: #f8f8f8;
    color: #222;
}

/* 功能区 */
.ribbon {
    display: flex;
    height: 113px;
    border-bottom: 1px solid #999;
    background: linear-gradient(#f8f8f8 87px, #edeef0 87px);
}

.group {
    display: flex;
    flex-direction: column;
    border-right: 1px solid #c0c3c5;
}

.group-body {
    display: flex;
    justify-content: center;
    gap: 8px;
    height: 87px;
    padding: 0 7px;
}

.group h2 {
    display: flex;
    align-items: center;
    justify-content: center;
    gap: 4px;
    height: 25px;
    padding: 0 5px 0 4px;
    font-size: 12px;
}

.big {
    display: flex;
    flex-direction: column;
    align-items: center;
    min-width: 32px;
    max-width: 48px;
    padding-top: 6px;
}

.big span {
    margin-top: 9px;
    line-height: 17px;
}

.big .caret {
    margin-top: 6px;
}

.col {
    padding-top: 1px;
}

.small {
    display: flex;
    align-items: center;
    gap: 4px;
    height: 24px;
    margin: 2px 0 4px;
    white-space: nowrap;
}

.small .caret {
    margin-left: 2px;
}

.small.off {
    color: #aaa;
}

.small.pressed {
    margin-left: -4px;
    padding: 0 4px;
    background: #dcdde0;
}

.divider {
    width: 1px;
    height: 66px;
    margin: 10px 1px 0;
    background: #dcdcdc;
}

/* 侧栏 */
.main {
    flex: 1;
    display: flex;
    min-height: 0;
}

.sidebar {
    flex: 0 0 538px;
    display: flex;
    flex-direction: column;
    border-right: 1px solid #999;
    background: #eeeff1;
    box-shadow: inset -2px 0 #cfd0d2;
}

.side-tabs {
    display: flex;
    height: 30px;
    border-top: 3px solid #a0a0a0;
    background: #cfd0d2;
}

.side-tabs button {
    display: flex;
    align-items: center;
    gap: 6px;
    padding: 0 8px 2px;
    border-right: 1px solid #a0a0a0;
    border-bottom: 1px solid #a0a0a0;
    background: #d9dddd;
    color: #77797b;
}

.side-tabs svg {
    width: 17px;
    height: 20px;
}

.side-tabs .active {
    margin-top: -2px;
    border-bottom: none;
    background: #eeeff1;
    color: #333;
}

.tree-head {
    display: flex;
    align-items: center;
    gap: 10px;
    height: 28px;
    padding: 0 11px 0 28px;
}

.tree-head label {
    flex: 1;
    font-weight: 500;
}

.tool {
    width: 16px;
    height: 20px;
}

.tool.wide {
    width: 20px;
}

.tree-search {
    display: flex;
    align-items: center;
    gap: 10px;
    padding: 0 11px 0 12px;
}

.search-box {
    flex: 1;
    display: flex;
    align-items: center;
    height: 25px;
    margin-right: -5px;
    padding-right: 5px;
    border: 1px solid #c0c3c6;
    background: #fff;
}

.search-box input {
    flex: 1;
    border: none;
    outline: none;
    font: inherit;
}

.tree {
    flex: 1;
    margin: 4px 6px 5px 8px;
    border-top: 1px solid #cdd0d2;
    background: #fdfdfd;
    list-style: none;
}

.tree li {
    display: flex;
    align-items: center;
    gap: 4px;
    height: 24px;
    padding-left: 5px;
}

.tree .child {
    gap: 6px;
    padding-left: 25px;
}

/* 图形区 */
.canvas {
    flex: 1;
    position: relative;
    background: #e8eaee;
}

.view-bar {
    position: absolute;
    top: 7px;
    left: 492px;
    display: flex;
    align-items: center;
    gap: 2px;
    height: 32px;
    padding: 0 4px 1px 3px;
    border: 1px solid #999;
    background: #fafafa;
}

.view-bar button {
    position: relative;
    display: grid;
    place-items: center;
    width: 24px;
    height: 24px;
}

.view-bar .has-menu {
    width: 25px;
}

.view-bar .on {
    border: 1px solid #aaa;
    background: #dedfe1;
}

.has-menu::after {
    content: "";
    position: absolute;
    right: 0;
    bottom: 1px;
    border: 2px solid #444;
    border-top-color: transparent;
    border-left-color: transparent;
}

.model {
    position: absolute;
    top: 145px;
    left: 318px;
    width: 450px;
    height: 500px;
}

.tolerance {
    position: absolute;
    right: 21px;
    bottom: 6px;
    font-family: "Liberation Mono", monospace;
    font-size: 12px;
    line-height: 14px;
    text-align: center;
    color: #8d9098;
}

/* 状态栏 */
.status {
    display: flex;
    align-items: center;
    gap: 10px;
    height: 38px;
    padding: 2px 18px 0 6px;
    border-top: 2px solid #999;
    background: #eeeff1;
    box-shadow: inset 0 2px #dcdcdc;
}

.status-tree {
    display: grid;
    place-items: center;
    width: 22px;
    height: 22px;
    margin-right: -3px;
    border: 1px solid #aaa;
    background: #dedfe1;
}

.status-tree svg {
    width: 14px;
    height: 17px;
}

.status-right {
    display: flex;
    align-items: flex-start;
    align-self: flex-start;
    gap: 2px;
    height: 30px;
    margin-left: auto;
}

.vsep.tall {
    height: 30px;
}

.swatch {
    width: 25px;
    height: 16px;
    margin: 7px 2px 0 9px;
    background: #000;
}

.find, .cubes, .filter {
    display: flex;
    align-items: center;
    height: 25px;
    margin-top: 2px;
    border: 1px solid #b4b6b8;
    background: #fafafa;
}

.find {
    width: 42px;
    padding-left: 5px;
}

.find-arrow {
    display: flex;
    align-items: center;
    height: 23px;
    margin-left: 5px;
    padding: 0 3px;
    border-left: 1px solid #c0c0c0;
}

.cubes {
    justify-content: center;
    width: 40px;
    height: 28px;
}

.filter {
    width: 177px;
    margin: 3px 0 0 95px;
}

.filter select {
    flex: 1;
    appearance: none;
    padding-left: 7px;
    border: none;
    background: none;
    font: inherit;
    color: inherit;
}

/* 对话框 */
.dialog {
    position: absolute;
    display: flex;
    flex-direction: column;
    border: 1px solid #999;
    background: #eeeff1;
}

.dialog-part {
    top: 202px;
    left: 570px;
    width: 258px;
    height: 330px;
}

.dialog-options {
    top: 346px;
    left: 1333px;
    width: 333px;
    height: 485px;
}

.dialog header {
    position: relative;
    height: 31px;
    background: #d9dddd;
}

.dialog header h2 {
    font-size: 12px;
    line-height: 34px;
    text-align: center;
    color: #222;
}

.close {
    position: absolute;
    top: 12px;
    right: 9px;
}

.dialog-body {
    flex: 1;
    padding: 16px 10px 0;
}

.dialog-options .dialog-body {
    padding: 16px 11px 0;
}

.type-row {
    display: flex;
    gap: 10px;
    margin-bottom: 10px;
}

.type-row fieldset:last-child {
    flex: 1;
}

fieldset {
    margin: 0;
    padding: 13px 19px 17px 13px;
    border: 1px solid #c3c6c8;
}

legend {
    padding: 0 4px;
    color: #222;
}

fieldset label {
    display: flex;
    align-items: center;
    gap: 7px;
    height: 21px;
    padding-left: 6px;
}

input[type="radio"] {
    appearance: none;
    width: 12px;
    height: 12px;
    margin: 0;
    border: 1px solid #555;
    border-radius: 50%;
    background: #fff;
}

input[type="radio"]:checked {
    background: radial-gradient(circle, #333 3px, #fff 4px);
}

.field {
    display: flex;
    align-items: center;
    justify-content: space-between;
    margin-bottom: 6px;
}

.field input {
    width: 119px;
    height: 25px;
    padding: 0 3px;
    border: 1px solid #b4b6b8;
    outline: none;
    background: #fff;
    font: inherit;
    color: inherit;
}

.field input::selection {
    background: #404040;
    color: #fff;
}

.dialog-foot {
    display: flex;
    justify-content: flex-end;
    gap: 8px;
    height: 47px;
    padding: 10px 10px 0;
    border-top: 1px solid #c3c6c8;
}

.dialog-options .dialog-foot {
    padding-right: 11px;
}

.dialog-foot button {
    width: 62px;
    height: 25px;
    border: 1px solid #b0b0b0;
    background: #f8f8f8;
}

.dialog-foot .primary {
    border-color: #6fcbf8;
    background: #a3e0ff;
}

/* 标注与悬浮层 */
.marks {
    position: absolute;
    top: 0;
    left: 0;
    width: 1827px;
    height: 1040px;
    pointer-events: none;
}

.top-shadow {
    position: absolute;
    top: 0;
    right: 29px;
    width: 276px;
    height: 3px;
    background: #8b8d8f;
    box-shadow: 0 0 3px #8b8d8f;
}

.help-dot {
    position: absolute;
    top: 37px;
    right: 8px;
    width: 16px;
    height: 16px;
    border-radius: 50%;
    background: #3c3c3c;
}

.upload {
    position: absolute;
    top: 27px;
    right: 14px;
    display: flex;
    width: 104px;
    height: 25px;
    border: 1px solid #1b86c8;
    border-radius: 3px;
    background: linear-gradient(#3aaaf0, #1b8ee0);
    box-shadow: 0 1px 2px #999;
}

.upload svg {
    width: 29px;
    height: 23px;
}

.upload span {
    flex: 1;
    border-radius: 0 2px 2px 0;
    background: linear-gradient(150deg, #f0f8ff, #9fd6f8);
    line-height: 25px;
    color: #33688f;
}

.watermark {
    position: absolute;
    right: 4px;
    bottom: 4px;
    display: grid;
    grid-template-columns: 58px 1fr;
    width: 207px;
    height: 63px;
    background: rgba(245, 248, 248, 0.4);
    pointer-events: none;
}

.watermark svg {
    grid-row: span 2;
    width: 58px;
    height: 58px;
    margin-top: 2px;
    opacity: 0.85;
}

.watermark strong {
    padding-left: 13px;
    font-size: 29px;
    line-height: 40px;
    color: rgba(70, 185, 120, 0.55);
}

.watermark span {
    font-size: 14px;
    line-height: 16px;
    color: rgba(120, 200, 195, 0.55);
}
```
